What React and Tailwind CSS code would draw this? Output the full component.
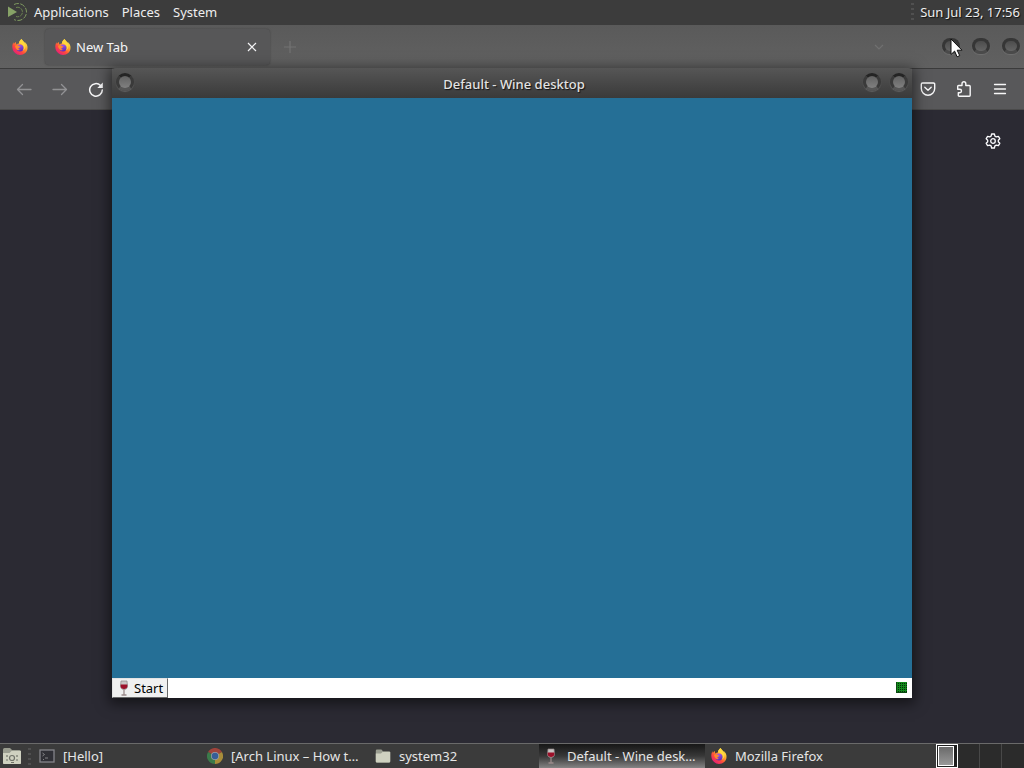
import React from 'react';

function FirefoxIcon({ className }) {
  return (
    <svg viewBox="0 0 32 32" className={className} aria-hidden="true">
      <defs>
        <linearGradient id="fox-body" x1="0.85" y1="0.1" x2="0.2" y2="0.95">
          <stop offset="0" stopColor="#fff14a" />
          <stop offset="0.35" stopColor="#ffa52b" />
          <stop offset="0.65" stopColor="#ff4a3c" />
          <stop offset="1" stopColor="#e31b7d" />
        </linearGradient>
        <linearGradient id="fox-globe" x1="0.3" y1="0" x2="0.6" y2="1">
          <stop offset="0" stopColor="#a05af0" />
          <stop offset="1" stopColor="#5b2bb5" />
        </linearGradient>
      </defs>
      <path
        d="M30 12c-1-3-3-5-5-6 1 2 2 4 2 5-2-5-6-7-8-11-4 3-5 6-5 9-2 0-4 1-5 2-1-1-1-3-1-5-2 1-3 2-4 4-1-1-1-3-1-4C1 10 0 14 1 19c1 7 8 13 15 13 8 0 15-6 15-14 0-2 0-4-1-6z"
        fill="url(#fox-body)"
      />
      <path d="M27 11C25 6 21 4 19 0c-4 3-5 6-5 9 5 0 9 4 9 8 0 3-2 6-4 7 5-1 9-6 8-13z" fill="#ffd83c" />
      <circle cx="16" cy="18" r="7" fill="url(#fox-globe)" />
      <path d="M6 14c2-2 5-2 8 0 1 1 2 1 3 1 0 2-3 2-4 3-1 2 1 4 4 3-3 3-9 2-11-7z" fill="#ff8a2b" />
    </svg>
  );
}

function ChromeIcon({ className }) {
  return (
    <svg viewBox="0 0 32 32" className={className} aria-hidden="true">
      <path d="M16 16 2.100 8A16 16 0 0 1 29.900 8z" fill="#b8463c" />
      <path d="M16 16V32A16 16 0 0 1 2.100 8z" fill="#3b8a4e" />
      <path d="M16 16 29.900 8A16 16 0 0 1 16 32z" fill="#c5a23a" />
      <circle cx="16" cy="16" r="8" fill="#b4b9c2" />
      <circle cx="16" cy="16" r="6.500" fill="#3566b0" />
    </svg>
  );
}

function WineIcon({ className }) {
  return (
    <svg viewBox="0 0 16 16" className={className} aria-hidden="true">
      <path d="M5 1h6l.5 5c0 2.500-1.500 3.500-3.500 3.500S4.500 8.500 4.500 6z" fill="#c9c5c5" stroke="#8d8585" strokeWidth="0.7" />
      <path d="M4.700 4.500h6.600l.1 1.500c0 2-1.400 3-3.400 3S4.600 8 4.600 6z" fill="#9c1029" />
      <path d="M8 9.500v5M5.500 15h5" stroke="#9a8a8a" strokeWidth="1.300" />
    </svg>
  );
}

function FolderIcon({ className, badge }) {
  return (
    <svg viewBox="0 0 20 18" className={className} aria-hidden="true">
      <path d="M1 2.500Q1 1 2.500 1H8l2 2h7.500Q19 3 19 4.500V16q0 1-1 1H2q-1 0-1-1z" fill="#9a9d90" />
      <path d="M1 6h6.500l2-2H19v12q0 1-1 1H2q-1 0-1-1z" fill="#cfd1c0" />
      {badge && (
        <g fill="none" stroke="#6f7268" strokeWidth="1.200">
          <circle cx="10" cy="11" r="2.500" />
          <path d="M5 8v2M4 13h2M15 8v2M14 13h2M9 15.500h3" />
        </g>
      )}
    </svg>
  );
}

function TerminalIcon({ className }) {
  return (
    <svg viewBox="0 0 16 14" className={className} aria-hidden="true">
      <rect x="1" y="1" width="14" height="12" fill="#303036" stroke="#85858a" strokeWidth="1.300" />
      <path d="M3.500 4l2 1.500-2 1.500M6 9h3M4 10.500h1" fill="none" stroke="#8c8c90" strokeWidth="0.9" />
    </svg>
  );
}

function MenuLogo() {
  return (
    <svg viewBox="0 0 20 20" className="size-5" fill="none" aria-hidden="true">
      <path d="M1 4.500l9 5.500-9 5z" fill="#87a267" />
      <path d="M7 2.500A8.500 8.500 0 1 1 7 17.500" stroke="#7f9a60" strokeWidth="1" strokeDasharray="5 1.500" />
      <path d="M9 5.500a4.800 4.800 0 1 1 0 9" stroke="#6c8551" strokeWidth="1" strokeDasharray="4 1" />
    </svg>
  );
}

// Sunken round knob used for the window manager buttons
function Knob({ label, dim }) {
  return (
    <button
      type="button"
      aria-label={label}
      className={
        dim
          ? 'h-4 w-[18px] rounded-full border-[3px] border-[#363636] border-b-[#4a4a4a] bg-linear-to-b from-[#4c4c4c] to-[#646464] shadow-[0_1px_1px_#6f6f6f]'
          : 'size-[18px] rounded-full border-[3px] border-[#3a3a3a] border-b-[#565656] border-t-[#242424] bg-linear-to-b from-[#626262] to-[#808080] shadow-[0_1px_1px_#606060]'
      }
    />
  );
}

// Dotted handle between panel applets
function Grip() {
  return (
    <span className="flex flex-col gap-[3px]" aria-hidden="true">
      <span className="h-0.5 w-[3px] bg-[#505050]" />
      <span className="h-0.5 w-[3px] bg-[#505050]" />
      <span className="h-0.5 w-[3px] bg-[#505050]" />
      <span className="h-0.5 w-[3px] bg-[#505050]" />
    </span>
  );
}

function TopPanel() {
  return (
    <header className="flex h-[25px] shrink-0 items-center justify-between bg-[#3c3c3c] pb-0.5 pl-[7px] pr-1 text-[#eeeeee] [text-shadow:1px_1px_1px_#111]">
      <nav className="flex items-center">
        <MenuLogo />
        <button type="button" className="ml-[7px]">Applications</button>
        <button type="button" className="ml-[13px]">Places</button>
        <button type="button" className="ml-[13px]">System</button>
      </nav>
      <div className="flex items-center gap-1.5">
        <Grip />
        <time>Sun Jul 23, 17:56</time>
      </div>
    </header>
  );
}

function TabStrip() {
  return (
    <div className="flex h-11 shrink-0 items-center border-b border-[#3b3b3b] bg-linear-to-b from-[#5a5a5a] to-[#616161] pr-1">
      <button type="button" aria-label="Firefox View" className="ml-3 mr-[17px]">
        <FirefoxIcon className="size-4" />
      </button>
      <div className="flex h-9 w-[225px] items-center rounded-sm bg-[#575758] pl-2.5 pr-[13px] text-[#f4f4f6] shadow-[0_0_2px_#424242]">
        <FirefoxIcon className="size-4" />
        <span className="ml-[5px] flex-1">New Tab</span>
        <button type="button" aria-label="Close tab">
          <svg viewBox="0 0 10 10" className="size-2.5" stroke="#f4f4f6" strokeWidth="1.200">
            <path d="M1 1l8 8M9 1L1 9" />
          </svg>
        </button>
      </div>
      <button type="button" aria-label="Open a new tab" className="ml-3.5">
        <svg viewBox="0 0 12 12" className="size-3" stroke="#737373" strokeWidth="1.200">
          <path d="M6 0v12M0 6h12" />
        </svg>
      </button>
      <button type="button" aria-label="List all tabs" className="ml-auto mr-[58px]">
        <svg viewBox="0 0 10 6" className="w-2.5" fill="none" stroke="#707070" strokeWidth="1.200">
          <path d="M1 1l4 4 4-4" />
        </svg>
      </button>
      <div className="flex gap-3 pb-0.5">
        <Knob label="Minimize Firefox" dim />
        <Knob label="Maximize Firefox" dim />
        <Knob label="Close Firefox" dim />
      </div>
    </div>
  );
}

function NavBar() {
  return (
    <div className="flex h-[41px] shrink-0 items-center justify-between border-b border-[#4a4a4a] bg-[#58585a] px-4 text-[#f7f7f8]">
      <div className="flex items-center gap-5">
        <button type="button" aria-label="Back">
          <svg viewBox="0 0 16 16" className="size-4" fill="none" stroke="#929294" strokeWidth="1.300" strokeLinecap="round" strokeLinejoin="round">
            <path d="M15 8.500H1.500M6.500 3.500l-5 5 5 5" />
          </svg>
        </button>
        <button type="button" aria-label="Forward">
          <svg viewBox="0 0 16 16" className="size-4" fill="none" stroke="#929294" strokeWidth="1.300" strokeLinecap="round" strokeLinejoin="round">
            <path d="M1 8.500h13.500M9.500 3.500l5 5-5 5" />
          </svg>
        </button>
        <button type="button" aria-label="Reload">
          <svg viewBox="0 0 16 16" className="size-4" fill="none" stroke="currentColor" strokeWidth="1.500" strokeLinecap="round">
            <path d="M12.500 4.500A6.300 6.300 0 1 0 14.300 9" />
            <path d="M14.800 1.500v5.500h-5.500z" fill="currentColor" stroke="none" />
          </svg>
        </button>
      </div>
      <div className="flex items-center gap-5">
        <button type="button" aria-label="Save to Pocket">
          <svg viewBox="0 0 16 16" className="size-4" fill="none" stroke="currentColor" strokeWidth="1.400" strokeLinecap="round" strokeLinejoin="round">
            <path d="M2.500 2h11a1.200 1.200 0 0 1 1.200 1.200V7.500a6.700 6.700 0 0 1-13.400 0V3.200A1.200 1.200 0 0 1 2.500 2z" />
            <path d="M4.800 6.300L8 9.300l3.200-3" />
          </svg>
        </button>
        <button type="button" aria-label="Extensions">
          <svg viewBox="0 0 16 16" className="size-4" fill="none" stroke="currentColor" strokeWidth="1.400" strokeLinejoin="round">
            <path d="M6 4.500V2.700a1.900 1.900 0 0 1 3.800 0v1.800h3.500q.9 0 .9.900V14.300q0 .9-.9.900H3.200q-.9 0-.9-.9V11.700h1.500a1.600 1.600 0 0 0 0-3.400H1.700V5.400q0-.9.900-.9z" />
          </svg>
        </button>
        <button type="button" aria-label="Open application menu">
          <svg viewBox="0 0 16 16" className="size-4" stroke="currentColor" strokeWidth="1.300" strokeLinecap="round">
            <path d="M2.500 3.500h11M2.500 8h11M2.500 12.500h11" />
          </svg>
        </button>
      </div>
    </div>
  );
}

function NewTabPage() {
  return (
    <main className="flex flex-1 items-start justify-end bg-[#2b2a33] pr-[23px] pt-[23px]">
      <button type="button" aria-label="Personalize new tab" className="text-[#fbfbfe]">
        <svg viewBox="0 0 16 16" className="size-4" fill="none" stroke="currentColor" strokeWidth="1.300" strokeLinejoin="round">
          <path d="M6.600 1h2.800l.5 2.100 1.400.8 2.100-.6 1.400 2.400L13.300 7.200v1.600l1.500 1.500-1.400 2.400-2.100-.6-1.400.8L9.400 15H6.600l-.5-2.100-1.400-.8-2.100.6-1.400-2.400 1.500-1.500V7.200L1.200 5.700l1.400-2.400 2.100.6 1.400-.8z" />
          <circle cx="8" cy="8" r="2.300" />
        </svg>
      </button>
    </main>
  );
}

function WineWindow() {
  return (
    <section
      aria-label="Wine desktop"
      className="absolute inset-x-28 bottom-[70px] top-[68px] flex flex-col shadow-[0_3px_12px_3px_rgba(0,0,0,0.5)]"
    >
      <div className="flex h-[30px] shrink-0 items-center justify-between rounded-t-sm bg-linear-to-b from-[#565656] to-[#3a3a3a] px-1 text-[#e2e2e2]">
        <div className="flex w-12 pb-0.5">
          <Knob label="Window menu" />
        </div>
        <h1 className="pl-1 pt-0.5 font-medium [text-shadow:1px_1px_1px_#111]">Default - Wine desktop</h1>
        <div className="flex w-12 justify-end gap-[9px] pb-0.5">
          <Knob label="Minimize" />
          <Knob label="Close" />
        </div>
      </div>
      <div className="flex-1 bg-[#256f96]" />
      <div className="flex h-5 shrink-0 items-stretch justify-between bg-white pr-[5px]">
        <button
          type="button"
          className="flex w-14 items-center gap-0.5 border border-b-[#696969] border-l-[#e3e3e3] border-r-[#696969] border-t-[#e3e3e3] bg-[#f0f0f0] pl-[3px] text-black"
        >
          <WineIcon className="size-4 shrink-0" />
          <span>Start</span>
        </button>
        {/* Tray activity light */}
        <svg viewBox="0 0 11 11" className="mt-1 size-[11px]" shapeRendering="crispEdges" aria-hidden="true">
          <rect width="11" height="11" fill="#138a1c" />
          <path
            d="M0 1.500h11M0 3.500h11M0 5.500h11M0 7.500h11M0 9.500h11"
            stroke="#062c0a"
            strokeWidth="1"
            strokeDasharray="1 1"
          />
          <path d="M0 0v11h11" fill="none" stroke="#0b4a12" strokeWidth="2" />
        </svg>
      </div>
    </section>
  );
}

function TaskButton({ icon, label, active }) {
  return (
    <button
      type="button"
      className={`flex h-full w-[166px] items-center gap-2 whitespace-nowrap pl-1 text-left ${
        active ? 'bg-linear-to-b from-[#171717] via-[#383838] to-[#858585]' : ''
      }`}
    >
      {icon}
      <span>{label}</span>
    </button>
  );
}

const tasks = [
  { label: '[Hello]', icon: <TerminalIcon className="size-4 shrink-0" /> },
  { label: '[Arch Linux – How t…', icon: <ChromeIcon className="size-4 shrink-0 opacity-80" /> },
  { label: 'system32', icon: <FolderIcon className="size-4 shrink-0" /> },
  { label: 'Default - Wine desk…', icon: <WineIcon className="size-4 shrink-0" />, active: true },
  { label: 'Mozilla Firefox', icon: <FirefoxIcon className="size-4 shrink-0" /> },
];

function BottomPanel() {
  return (
    <footer className="flex h-[25px] shrink-0 items-center border-t border-[#6a6a6a] bg-[#3b3b3b] text-[#e6e6e6] [text-shadow:1px_1px_1px_#111]">
      <button type="button" aria-label="Show folders" className="ml-0.5">
        <FolderIcon className="size-5" badge />
      </button>
      <span className="ml-1.5 mr-1">
        <Grip />
      </span>
      <div className="flex h-full flex-1 gap-0.5">
        {tasks.map((task) => (
          <TaskButton key={task.label} {...task} />
        ))}
      </div>
      {/* Workspace switcher */}
      <div className="flex h-full bg-[#2b2b2b]">
        <button type="button" aria-label="Workspace 1" className="flex w-[22px] border border-white bg-[#1f1f1f] p-px">
          <span className="h-full w-4 border border-white bg-linear-to-b from-[#6a6a6a] to-[#999999]" />
        </button>
        <button type="button" aria-label="Workspace 2" className="w-[22px] border-r border-[#484848]" />
        <button type="button" aria-label="Workspace 3" className="w-[22px] border-r border-[#484848]" />
        <button type="button" aria-label="Workspace 4" className="w-[22px]" />
      </div>
    </footer>
  );
}

function App() {
  return (
    <div className="relative flex h-screen flex-col overflow-hidden bg-[#2b2a33] font-['Noto_Sans',sans-serif] text-[13px] leading-5">
      <TopPanel />
      <TabStrip />
      <NavBar />
      <NewTabPage />
      <BottomPanel />
      <WineWindow />

      {/* Mouse pointer */}
      <svg viewBox="0 0 13 20" className="absolute right-[61px] top-[38px] h-5 w-[13px]" aria-hidden="true">
        <path d="M1 1v15.500l3.600-3.400 2.500 5.700 2.600-1.200-2.500-5.400H12z" fill="#fff" stroke="#111" strokeWidth="1" />
      </svg>
    </div>
  );
}

export default App;
